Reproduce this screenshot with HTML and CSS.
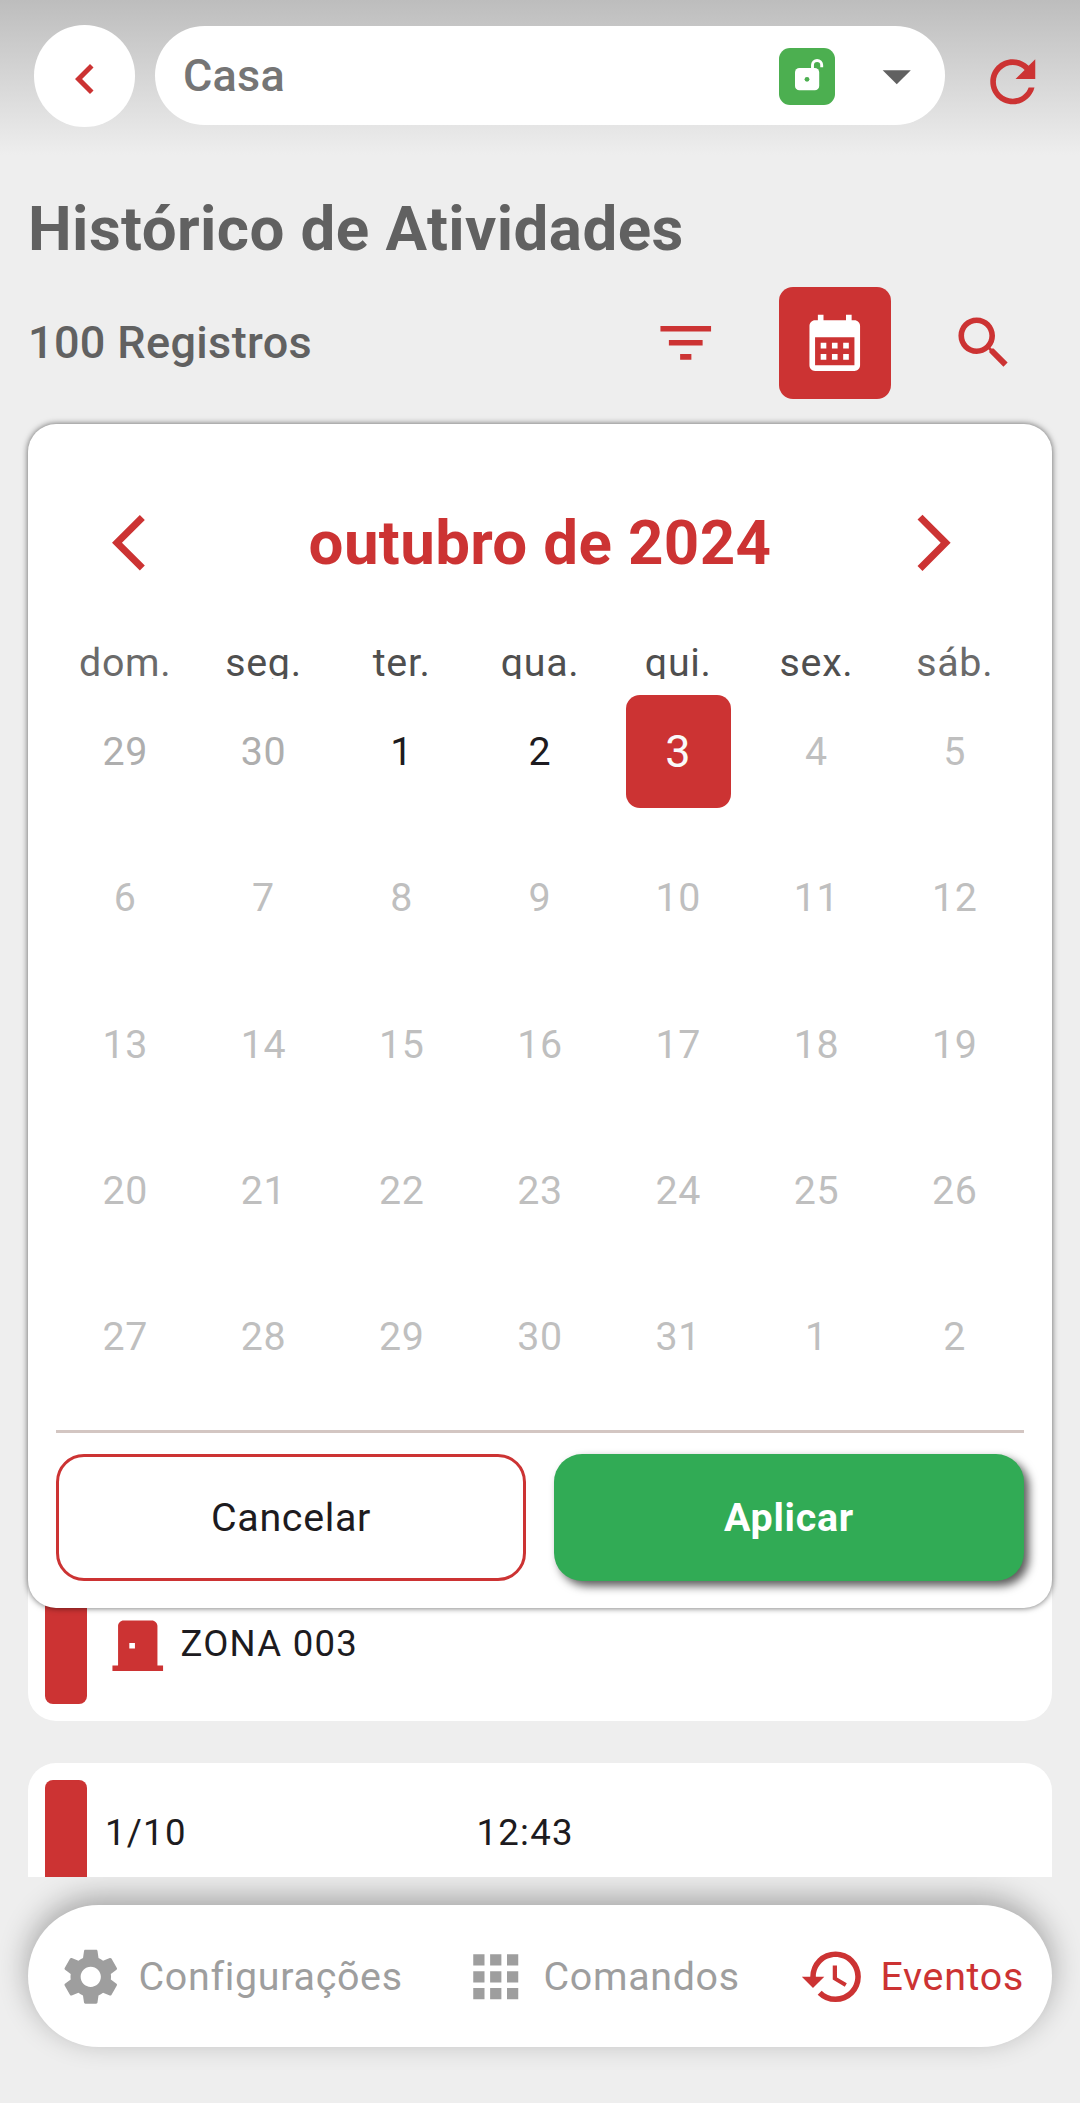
FILE: index.html
```html
<!DOCTYPE html>
<html lang="pt-BR">
<head>
<meta charset="utf-8">
<title>Histórico de Atividades</title>
<link rel="stylesheet" href="styles.css">
</head>
<body>
<div class="app">
  <header class="topbar">
    <button class="back" aria-label="Voltar">
      <svg class="icon-back" viewBox="0 0 24 24"><path d="M15.41 7.41L14 6l-6 6 6 6 1.41-1.41L10.83 12z"/></svg>
    </button>
    <div class="place">
      <span class="place-name">Casa</span>
      <span class="lock">
        <svg viewBox="0 0 56 57"><rect x="16" y="20" width="24.2" height="22.3" rx="4.4" fill="#fff"/><circle cx="28" cy="31.3" r="2.4" fill="#4caf50"/><path d="M33.5 22v-4.900a4.600 4.600 0 0 1 9.200 0v2.200" fill="none" stroke="#fff" stroke-width="2.9"/></svg>
      </span>
      <svg class="icon caret" viewBox="0 0 24 24"><path d="M7 10l5 5 5-5z"/></svg>
    </div>
    <svg class="icon refresh" viewBox="0 0 24 24"><path d="M17.65 6.35C16.2 4.9 14.21 4 12 4c-4.42 0-7.99 3.58-7.99 8s3.57 8 7.99 8c3.73 0 6.84-2.55 7.73-6h-2.08c-.82 2.33-3.04 4-5.65 4-3.31 0-6-2.69-6-6s2.69-6 6-6c1.66 0 3.14.69 4.22 1.78L13 11h7V4l-2.35 2.35z"/></svg>
  </header>

  <h1 class="title">Histórico de Atividades</h1>

  <div class="toolbar">
    <span class="count">100 Registros</span>
    <div class="tools">
      <button class="tool" aria-label="Filtrar"><svg class="icon" viewBox="0 0 24 24"><path d="M10 18h4v-2h-4v2zM3 6v2h18V6H3zm3 7h12v-2H6v2z"/></svg></button>
      <button class="tool tool-active" aria-label="Data"><svg class="icon" viewBox="0 0 24 24"><path d="M19 4h-1V2h-2v2H8V2H6v2H5c-1.11 0-1.99.9-1.99 2L3 20c0 1.1.89 2 2 2h14c1.1 0 2-.9 2-2V6c0-1.1-.9-2-2-2zm0 16H5V10h14v10zM9 14H7v-2h2v2zm4 0h-2v-2h2v2zm4 0h-2v-2h2v2zm-8 4H7v-2h2v2zm4 0h-2v-2h2v2zm4 0h-2v-2h2v2z"/></svg></button>
      <button class="tool" aria-label="Buscar"><svg class="icon" viewBox="0 0 24 24"><path d="M15.5 14h-.79l-.28-.27C15.41 12.59 16 11.11 16 9.5 16 5.91 13.09 3 9.5 3S3 5.91 3 9.5 5.91 16 9.5 16c1.61 0 3.09-.59 4.23-1.57l.27.28v.79l5 4.99L20.49 19l-4.99-5zm-6 0C7.01 14 5 11.99 5 9.5S7.01 5 9.5 5 14 7.01 14 9.5 11.99 14 9.5 14z"/></svg></button>
    </div>
  </div>

  <main class="events">
    <article class="event">
      <div class="stripe"></div>
      <div class="zone">
        <svg class="icon" viewBox="0 0 24 24"><path d="M19 19V5c0-1.1-.9-2-2-2H7c-1.1 0-2 .9-2 2v14H3v2h18v-2h-2zm-8-6H9v-2h2v2z"/></svg>
        <span>ZONA 003</span>
      </div>
    </article>
    <article class="event">
      <div class="stripe"></div>
      <div class="when"><span>1/10</span><span>12:43</span></div>
    </article>
  </main>

  <nav class="bottom-nav">
    <a class="nav-item"><svg class="icon" viewBox="0 0 24 24"><path d="M19.14 12.94c.04-.3.06-.61.06-.94 0-.32-.02-.64-.07-.94l2.03-1.58c.18-.14.23-.41.12-.61l-1.92-3.32c-.12-.22-.37-.29-.59-.22l-2.39.96c-.5-.38-1.03-.7-1.62-.94l-.36-2.54c-.04-.24-.24-.41-.48-.41h-3.84c-.24 0-.43.17-.47.41l-.36 2.54c-.59.24-1.13.57-1.62.94l-2.39-.96c-.22-.08-.47 0-.59.22L2.74 8.87c-.12.21-.08.47.12.61l2.03 1.58c-.05.3-.09.63-.09.94s.02.64.07.94l-2.03 1.58c-.18.14-.23.41-.12.61l1.92 3.32c.12.22.37.29.59.22l2.39-.96c.5.38 1.03.7 1.62.94l.36 2.54c.05.24.24.41.48.41h3.84c.24 0 .44-.17.47-.41l.36-2.54c.59-.24 1.13-.56 1.62-.94l2.39.96c.22.08.47 0 .59-.22l1.92-3.32c.12-.22.07-.47-.12-.61l-2.01-1.58zM12 15.6c-1.98 0-3.6-1.62-3.6-3.6s1.62-3.6 3.6-3.6 3.6 1.62 3.6 3.6-1.62 3.6-3.6 3.6z"/></svg><span>Configurações</span></a>
    <a class="nav-item"><svg class="icon" viewBox="0 0 24 24"><path d="M4 8h4V4H4v4zm6 12h4v-4h-4v4zm-6 0h4v-4H4v4zm0-6h4v-4H4v4zm6 0h4v-4h-4v4zm6-10v4h4V4h-4zm-6 4h4V4h-4v4zm6 6h4v-4h-4v4zm0 6h4v-4h-4v4z"/></svg><span>Comandos</span></a>
    <a class="nav-item nav-active"><svg class="icon" viewBox="0 0 24 24"><path d="M13 3a9 9 0 0 0-9 9H1l3.89 3.89.07.14L9 12H6c0-3.87 3.13-7 7-7s7 3.13 7 7-3.13 7-7 7c-1.93 0-3.68-.79-4.94-2.06l-1.42 1.42A8.954 8.954 0 0 0 13 21a9 9 0 0 0 0-18zm-1 5v5l4.28 2.54.72-1.21-3.5-2.08V8H12z"/></svg><span>Eventos</span></a>
  </nav>

  <section class="picker">
    <div class="month">
      <svg class="icon" viewBox="0 0 24 24"><path d="M11.67 3.87L9.9 2.1 0 12l9.9 9.9 1.77-1.77L3.54 12z"/></svg>
      <h2 class="month-name">outubro de 2024</h2>
      <svg class="icon" viewBox="0 0 24 24"><path d="M6.23 20.23L8 22l10-10L8 2 6.23 3.77 14.46 12z"/></svg>
    </div>
    <div class="weekdays">
      <span class="weekend">dom.</span><span>seg.</span><span>ter.</span><span>qua.</span><span>qui.</span><span>sex.</span><span class="weekend">sáb.</span>
    </div>
    <div class="days">
      <span class="outside">29</span><span class="outside">30</span><span class="open">1</span><span class="open">2</span><span class="selected">3</span><span>4</span><span>5</span>
      <span>6</span><span>7</span><span>8</span><span>9</span><span>10</span><span>11</span><span>12</span>
      <span>13</span><span>14</span><span>15</span><span>16</span><span>17</span><span>18</span><span>19</span>
      <span>20</span><span>21</span><span>22</span><span>23</span><span>24</span><span>25</span><span>26</span>
      <span>27</span><span>28</span><span>29</span><span>30</span><span>31</span><span>1</span><span>2</span>
    </div>
    <div class="actions">
      <button class="btn btn-cancel">Cancelar</button>
      <button class="btn btn-apply">Aplicar</button>
    </div>
  </section>
</div>
</body>
</html>
```
FILE: styles.css
```css
* { box-sizing: border-box; }

body {
  margin: 0;
  background: #eee;
  font-family: Roboto, "Liberation Sans", sans-serif;
  color: #1d1b20;
}

button {
  margin: 0;
  padding: 0;
  border: 0;
  background: none;
  font: inherit;
  color: inherit;
}

h1, h2 { margin: 0; }

.app {
  position: relative;
  display: flex;
  flex-direction: column;
  height: 2103px;
  overflow: hidden;
}

.icon {
  display: block;
  flex: none;
  width: 67.5px;
  height: 67.5px;
  fill: currentColor;
}

/* Top bar */
.topbar {
  display: flex;
  align-items: flex-start;
  height: 155px;
  padding: 25px 34px 0;
  background: linear-gradient(#bdbdbd, #eee);
}

.back {
  display: flex;
  align-items: center;
  justify-content: center;
  width: 101px;
  height: 101.5px;
  padding-top: 6px;
  border-radius: 50%;
  background: #fff;
  color: #c33;
}

.icon-back { width: 60px; height: 60px; fill: currentColor; }

.place {
  display: flex;
  align-items: center;
  width: 790px;
  height: 99px;
  margin: 1px 0 0 20px;
  padding: 0 15px 0 28px;
  border-radius: 50px;
  background: #fff;
}

.place-name {
  flex: 1;
  color: #757575;
  font-size: 45px;
  font-weight: 500;
  letter-spacing: .2px;
}

.lock {
  width: 56px;
  height: 57px;
  margin-top: 1px;
  border-radius: 11px;
  background: #4caf50;
}

.lock svg { display: block; }

.caret { margin-left: 27.5px; color: #616161; }

.refresh { margin: 23px 0 0 33.500px; color: #c33; }

/* Heading and tools */
.title {
  height: 62px;
  margin: 42.5px 28px 0;
  font-size: 61.875px;
  line-height: 62px;
  font-weight: 700;
  letter-spacing: .42px;
  color: #616161;
}

.toolbar {
  display: flex;
  align-items: center;
  justify-content: space-between;
  height: 112.5px;
  margin: 27px 40px 0 28px;
}

.count {
  font-size: 45px;
  font-weight: 500;
  letter-spacing: .35px;
  color: #616161;
}

.tools { display: flex; gap: 36.5px; }

.tool {
  display: flex;
  align-items: center;
  justify-content: center;
  width: 112.5px;
  height: 112.5px;
  border-radius: 14px;
  color: #c33;
}

.tool-active { background: #c33; color: #fff; }

/* Event list */
.events {
  position: relative;
  z-index: 1;
  display: flex;
  flex-direction: column;
  gap: 42px;
  height: 1452.5px;
  margin: 25px 28px 0;
  padding-top: 1047px;
  overflow: hidden;
}

.event {
  display: flex;
  flex: none;
  height: 250px;
  padding: 17px;
  border-radius: 28px;
  background: #fff;
  font-size: 36.56px;
  letter-spacing: 1.25px;
}

.stripe { width: 42px; border-radius: 8px; background: #c33; }

.zone {
  display: flex;
  align-items: center;
  align-self: flex-end;
  gap: 9px;
  height: 67.5px;
  margin: 0 0 25px 17px;
}

.zone .icon { color: #c33; }
.zone span { line-height: 64px; height: 67.5px; }

.when {
  display: grid;
  grid-template-columns: 371.5px 1fr;
  margin-left: 18px;
  line-height: 105px;
}

/* Bottom navigation */
.bottom-nav {
  display: flex;
  align-items: center;
  justify-content: space-between;
  height: 141.5px;
  margin: 28.5px 28px 0;
  padding: 1px 28px 0 29px;
  border-radius: 71px;
  background: #fff;
  box-shadow: 0 -8px 30px rgba(0, 0, 0, .31);
  font-size: 39.375px;
  letter-spacing: .7px;
  color: #9e9e9e;
}

.nav-item { display: flex; align-items: center; gap: 14px; }
.nav-active { color: #c33; }

/* Date picker */
.picker {
  position: absolute;
  z-index: 2;
  top: 424px;
  left: 28px;
  width: 1024px;
  height: 1184px;
  padding: 0 28.125px;
  border-radius: 28px;
  background: #fff;
  box-shadow: 0 0 6px rgba(0, 0, 0, .6);
}

.month {
  display: flex;
  align-items: center;
  justify-content: space-between;
  height: 209.5px;
  padding: 28px 56px 0;
  color: #c33;
}

.month-name { font-size: 61.875px; font-weight: 700; letter-spacing: .35px; }

.weekdays {
  display: grid;
  grid-template-columns: repeat(7, 1fr);
  height: 45px;
  overflow: hidden;
  color: #4f4f4f;
  font-size: 39.375px;
  line-height: 57px;
  letter-spacing: .7px;
  text-align: center;
}

.weekend { color: #6a6a6a; }

.days {
  display: grid;
  grid-template-columns: repeat(7, 1fr);
  grid-auto-rows: 146.25px;
  color: #bfbfbf;
  font-size: 39.375px;
  letter-spacing: .7px;
}

.days span {
  display: flex;
  align-items: center;
  justify-content: center;
  margin: 16.875px;
  border-radius: 14px;
}

.days .outside { color: #aeaeae; }
.days .open { color: #1d1b20; }
.days .selected { background: #c33; color: #fafafa; font-size: 45px; }

.actions {
  display: grid;
  grid-template-columns: 1fr 1fr;
  gap: 28px;
  margin-top: 20.25px;
  padding-top: 21px;
  border-top: 3px solid #d3c6c2;
}

.btn {
  height: 126.5px;
  border-radius: 28px;
  font-size: 39.375px;
  letter-spacing: .7px;
}

.btn-cancel { border: 3px solid #c33; }

.btn-apply {
  background: #31ab55;
  color: #fff;
  font-weight: 700;
  box-shadow: 5px 5px 10px rgba(0, 0, 0, .65);
}
```
